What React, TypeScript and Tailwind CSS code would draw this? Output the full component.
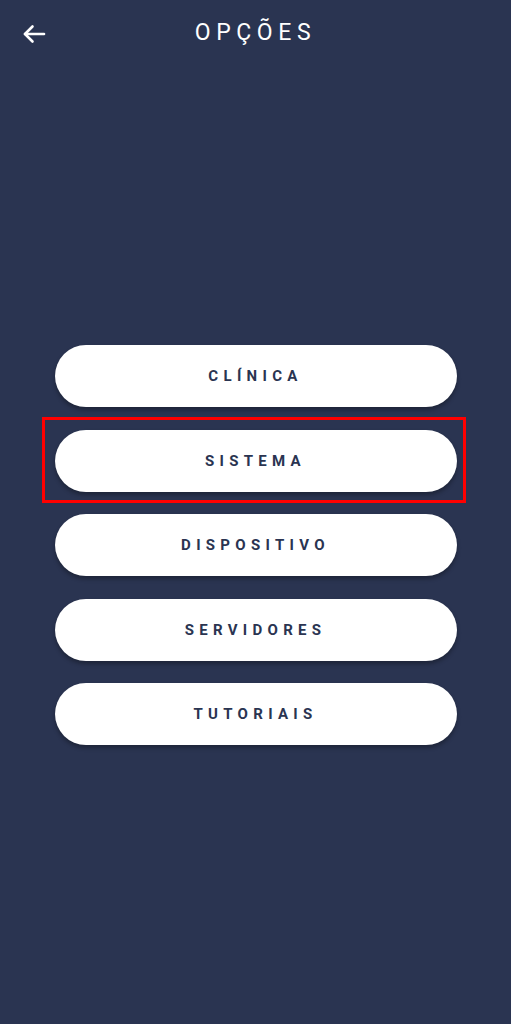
import React from 'react';

const options = ['CLÍNICA', 'SISTEMA', 'DISPOSITIVO', 'SERVIDORES', 'TUTORIAIS'];

const App: React.FC = () => {
    return (
        <div className="min-h-screen bg-[#2a3451] font-['Roboto',sans-serif]">
            <header className="relative h-16 flex items-center justify-center">
                <button className="absolute left-[22px] top-[24px] text-white">
                    <svg width="25" height="20" viewBox="0 0 25 20" fill="none" stroke="currentColor" strokeWidth="2.6" strokeLinecap="round" strokeLinejoin="round">
                        <path d="M3 10H22" />
                        <path d="M10.5 2.5L3 10l7.5 7.5" />
                    </svg>
                </button>
                <h1 className="text-[23px] leading-none font-normal tracking-[5.6px] text-white">OPÇÕES</h1>
            </header>

            <main className="pt-[281px] flex flex-col items-center gap-[22.5px]">
                {options.map((label) => (
                    <div key={label} className="relative">
                        <button className="w-[402px] h-[62px] rounded-full bg-white shadow-[0_3px_4px_rgba(0,0,0,0.3)] flex items-center justify-center">
                            <span className="text-[15px] leading-none font-bold tracking-[5.3px] text-[#2a3451] pt-[1px]">{label}</span>
                        </button>
                        {label === 'SISTEMA' && (
                            <div className="absolute -left-[13px] -top-[13px] -right-[9px] -bottom-[11px] border-[3px] border-[#ff0000] pointer-events-none"></div>
                        )}
                    </div>
                ))}
            </main>
        </div>
    );
};

export default App;
